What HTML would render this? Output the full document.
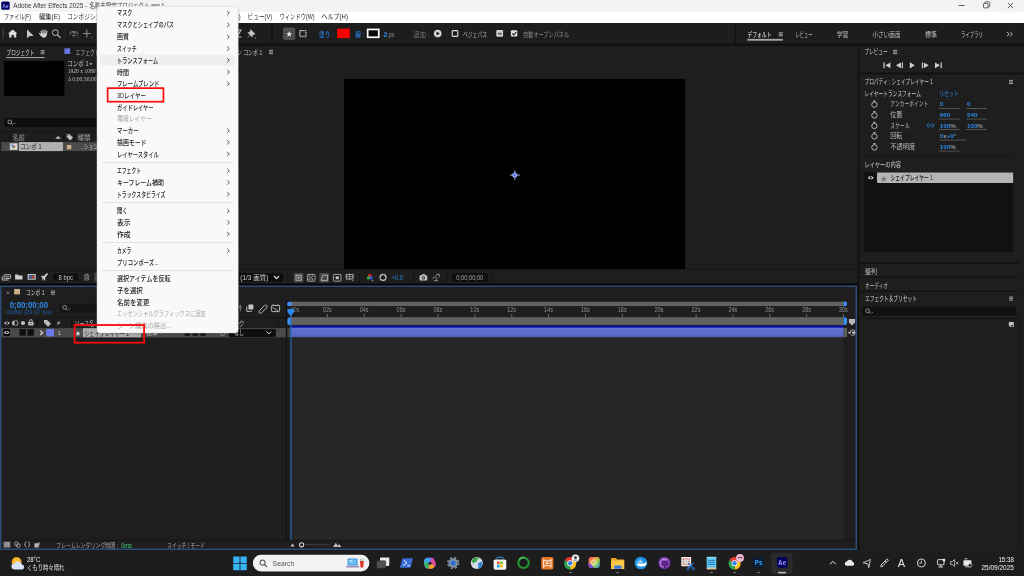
<!DOCTYPE html>
<html lang="ja">
<head>
<meta charset="utf-8">
<title>Adobe After Effects 2025</title>
<style>
html,body{margin:0;padding:0;background:#1e1e1e;overflow:hidden}
body{width:1024px;height:576px;position:relative}
svg{display:block;position:absolute;left:0;top:0;will-change:transform}
svg text{font-family:"Liberation Sans", "Noto Sans CJK JP", sans-serif;white-space:pre}
</style>
</head>
<body>
<svg width="1024" height="576" viewBox="0 0 1024 576">

<rect x="0" y="0" width="1024" height="576" fill="#1e1e1e"/>
<rect x="0" y="0" width="1024" height="23" fill="#ffffff"/>
<rect x="0" y="0" width="1024" height="11.7" fill="#f3f3f3"/>
<rect x="1.2" y="1.5" width="8.5" height="8.3" fill="#00005b" rx="1.6"/>
<text x="5.45" y="7.6" font-size="5" fill="#9999ff" text-anchor="middle" font-weight="700">Ae</text>
<text x="13.2" y="8.49" font-size="7.2" fill="#3c3c3c" textLength="74" lengthAdjust="spacingAndGlyphs">Adobe After Effects 2025 -</text>
<text x="89.4" y="8.39" font-size="7.2" fill="#3c3c3c" textLength="74.4" lengthAdjust="spacingAndGlyphs">名称未設定プロジェクト.aep *</text>
<line x1="958.5" y1="5.5" x2="964.5" y2="5.5" stroke="#333" stroke-width="0.8" />
<rect x="983.5" y="3.3" width="4.6" height="4.6" fill="none" rx="1" stroke="#333" stroke-width="0.8"/>
<path d="M985 3.3 V2.6 a0.8 0.8 0 0 1 .8 -.8 H989 a0.8 0.8 0 0 1 .8 .8 V6 a0.8 0.8 0 0 1 -.8 .8 H988.2" fill="none" stroke="#333" stroke-width="0.7"/>
<path d="M1007.8 2.8 L1013.2 8.2 M1013.2 2.8 L1007.8 8.2" fill="none" stroke="#333" stroke-width="0.8"/>
<text x="4" y="18.89" font-size="7.2" fill="#2a2a2a" textLength="27" lengthAdjust="spacingAndGlyphs">ファイル(F)</text>
<text x="39" y="18.89" font-size="7.2" fill="#2a2a2a" textLength="21" lengthAdjust="spacingAndGlyphs">編集(E)</text>
<text x="67" y="18.89" font-size="7.2" fill="#2a2a2a" textLength="48" lengthAdjust="spacingAndGlyphs">コンポジション(C)</text>
<text x="122" y="18.89" font-size="7.2" fill="#2a2a2a" textLength="29" lengthAdjust="spacingAndGlyphs">レイヤー(L)</text>
<text x="158" y="18.89" font-size="7.2" fill="#2a2a2a" textLength="32" lengthAdjust="spacingAndGlyphs">エフェクト(T)</text>
<text x="194.6" y="18.89" font-size="7.2" fill="#2a2a2a" textLength="46" lengthAdjust="spacingAndGlyphs">アニメーション(A)</text>
<text x="247.6" y="18.89" font-size="7.2" fill="#2a2a2a" textLength="24.6" lengthAdjust="spacingAndGlyphs">ビュー(V)</text>
<text x="279.5" y="18.89" font-size="7.2" fill="#2a2a2a" textLength="35" lengthAdjust="spacingAndGlyphs">ウィンドウ(W)</text>
<text x="321.5" y="18.89" font-size="7.2" fill="#2a2a2a" textLength="26.5" lengthAdjust="spacingAndGlyphs">ヘルプ(H)</text>
<rect x="0" y="23" width="1024" height="22" fill="#1d1d1d"/>
<rect x="0" y="43.6" width="1024" height="1.2" fill="#101010"/>
<line x1="3.2" y1="28" x2="3.2" y2="38.8" stroke="#4a4a4a" stroke-width="1" />
<path d="M8 33.6 L12.7 29.6 L17.4 33.6 L16.2 33.6 L16.2 37.4 L13.9 37.4 L13.9 35 L11.5 35 L11.5 37.4 L9.2 37.4 L9.2 33.6 Z" fill="#dcdcdc"/>
<line x1="21.9" y1="28" x2="21.9" y2="39" stroke="#282828" stroke-width="1" />
<path d="M27 29.3 L27 38.3 L29.6 35.9 L33.7 35.9 Z" fill="#c4c4c4"/>
<path d="M41.6 34 L41 31.2 M43.2 33.6 L43 29.9 M44.9 33.6 L45.2 30 M46.4 34 L47 31.2 M41 35.4 L39.5 33.4" fill="none" stroke="#cfcfcf" stroke-width="1.15" stroke-linecap="round"/>
<path d="M40.8 33.6 L47 33.4 L46.6 36 Q45.6 37.9 43.8 37.8 Q42 37.7 40.9 35.8 Z" fill="#cfcfcf"/>
<circle cx="55.3" cy="32.6" r="2.9" fill="none" stroke="#c8c8c8" stroke-width="0.9"/>
<line x1="57.4" y1="34.8" x2="60.6" y2="37.8" stroke="#c8c8c8" stroke-width="1.1" />
<line x1="65" y1="28" x2="65" y2="39" stroke="#282828" stroke-width="1" />
<path d="M70.4 34.6 q-1.4 -1.6 .6 -2.6 q2.4 -1.2 5.2 -.2 q2.4 1 1.4 2.6 q-.8 1.2 -3.2 1.4" fill="none" stroke="#7c7c7c" stroke-width="0.9"/>
<circle cx="74.2" cy="32.6" r="1.5" fill="#6a6a6a"/>
<path d="M72 34.8 l2.6 .4 l-1.6 1.9 Z" fill="#7c7c7c"/>
<rect x="77.6" y="37.2" width="1" height="1" fill="#7a7a7a"/>
<path d="M86.8 29.6 V37.4 M83 33.5 H90.6" fill="none" stroke="#8a8a8a" stroke-width="1.1"/>
<rect x="91" y="37.2" width="1" height="1" fill="#8a8a8a"/>
<rect x="100" y="30" width="7" height="7" fill="none" rx="1" stroke="#777" stroke-width="0.9"/>
<rect x="113" y="30" width="7" height="7" fill="none" rx="1" stroke="#777" stroke-width="0.9"/>
<rect x="126" y="30" width="7" height="7" fill="none" rx="1" stroke="#777" stroke-width="0.9"/>
<rect x="140" y="30" width="7" height="7" fill="none" rx="1" stroke="#777" stroke-width="0.9"/>
<rect x="153" y="30" width="7" height="7" fill="none" rx="1" stroke="#777" stroke-width="0.9"/>
<rect x="166" y="30" width="7" height="7" fill="none" rx="1" stroke="#777" stroke-width="0.9"/>
<rect x="180" y="30" width="7" height="7" fill="none" rx="1" stroke="#777" stroke-width="0.9"/>
<rect x="193" y="30" width="7" height="7" fill="none" rx="1" stroke="#777" stroke-width="0.9"/>
<rect x="206" y="30" width="7" height="7" fill="none" rx="1" stroke="#777" stroke-width="0.9"/>
<rect x="219" y="30" width="7" height="7" fill="none" rx="1" stroke="#777" stroke-width="0.9"/>
<path d="M236 30 L241 30 L237 37 L241.4 37" fill="none" stroke="#bdbdbd" stroke-width="1.1"/>
<path d="M250.5 29.6 l4.6 4.4 l-1.3 .3 l-1.4 1.4 l-.2 1.3 l-4.3 -4.3 l1.3 -.2 l1.4 -1.4 Z M249.6 35.4 l-1.8 2" fill="#c4c4c4" stroke="#c4c4c4" stroke-width="0.6"/>
<rect x="254.8" y="37.4" width="1" height="1" fill="#bdbdbd"/>
<line x1="272" y1="24" x2="272" y2="43.5" stroke="#101010" stroke-width="1.2" />
<rect x="283" y="27.4" width="12.3" height="12.5" fill="#4d4d4d" rx="1.6"/>
<text x="289.15" y="36" font-size="6.4" fill="#f4f4f4" text-anchor="middle">★</text>
<rect x="299.7" y="30.5" width="6.4" height="6.2" fill="#3a3a3a" rx="0.8" stroke="#c8c8c8" stroke-width="1.1" stroke-dasharray="1.5 .7"/>
<rect x="301.4" y="32.2" width="3" height="2.8" fill="#1d1d1d"/>
<text x="319" y="36.69" font-size="7.2" fill="#2a82e0" textLength="14.5" lengthAdjust="spacingAndGlyphs" font-weight="500">塗り :</text>
<rect x="337.1" y="28.6" width="12.7" height="9.5" fill="#fb0000"/>
<text x="355.3" y="36.69" font-size="7.2" fill="#2a82e0" textLength="8.8" lengthAdjust="spacingAndGlyphs" font-weight="500">線 :</text>
<rect x="366.8" y="28.6" width="12.8" height="9.5" fill="#ffffff"/>
<rect x="368.5" y="30.3" width="9.4" height="6.1" fill="#0a0a0a"/>
<text x="383.4" y="36.69" font-size="7.2" fill="#2d8ceb" font-weight="700">2</text>
<text x="388.4" y="36.55" font-size="6.8" fill="#8c8c8c" textLength="6" lengthAdjust="spacingAndGlyphs">px</text>
<text x="413.5" y="36.69" font-size="7.2" fill="#787878" textLength="15.8" lengthAdjust="spacingAndGlyphs">追加 :</text>
<circle cx="437.7" cy="33.6" r="3.8" fill="#d6d6d6"/>
<path d="M436.5 31.6 L439.8 33.6 L436.5 35.6 Z" fill="#1d1d1d"/>
<line x1="447.6" y1="28.5" x2="447.6" y2="39" stroke="#252525" stroke-width="1" />
<rect x="452.2" y="30.6" width="5.6" height="5.8" fill="none" rx="1" stroke="#e0e0e0" stroke-width="1.1"/>
<text x="463" y="36.79" font-size="7.2" fill="#b4b4b4" textLength="24" lengthAdjust="spacingAndGlyphs">ベジェパス</text>
<rect x="496.3" y="30" width="6.8" height="6.8" fill="#d0d0d0" rx="1"/>
<path d="M499.4 32.6 l-1.6 1.2 l1.6 1.2 Z M500.4 32.6 l1.6 1.2 l-1.6 1.2 Z" fill="#1d1d1d"/>
<rect x="510.9" y="30.3" width="6.4" height="6.3" fill="#e0e0e0" rx="1"/>
<path d="M512.3 33.4 l1.5 1.5 l2.4 -2.9" fill="none" stroke="#1d1d1d" stroke-width="1.1"/>
<text x="523.1" y="37.19" font-size="7.2" fill="#8e8e8e" textLength="46" lengthAdjust="spacingAndGlyphs">自動オープンパネル</text>
<line x1="735.3" y1="24" x2="735.3" y2="43.5" stroke="#101010" stroke-width="1.2" />
<text x="747.6" y="36.99" font-size="7.2" fill="#f2f2f2" textLength="23.8" lengthAdjust="spacingAndGlyphs">デフォルト</text>
<path d="M778.8 32.8 H782.8 M778.8 34.3 H782.8 M778.8 35.8 H782.8" fill="none" stroke="#c4c4c4" stroke-width="0.8"/>
<rect x="747.3" y="38.9" width="35.6" height="1.8" fill="#a8a8a8"/>
<text x="795.5" y="36.99" font-size="7.2" fill="#bdbdbd" textLength="17" lengthAdjust="spacingAndGlyphs">レビュー</text>
<text x="836.7" y="36.99" font-size="7.2" fill="#bdbdbd" textLength="11.8" lengthAdjust="spacingAndGlyphs">学習</text>
<text x="872.5" y="36.99" font-size="7.2" fill="#bdbdbd" textLength="28" lengthAdjust="spacingAndGlyphs">小さい画面</text>
<text x="925" y="36.99" font-size="7.2" fill="#bdbdbd" textLength="12" lengthAdjust="spacingAndGlyphs">標準</text>
<text x="961" y="36.99" font-size="7.2" fill="#bdbdbd" textLength="22" lengthAdjust="spacingAndGlyphs">ライブラリ</text>
<path d="M1007 32 l2.2 2.1 l-2.2 2.1 M1010.2 32 l2.2 2.1 l-2.2 2.1" fill="none" stroke="#d0d0d0" stroke-width="0.9"/>
<rect x="0" y="44.8" width="1024" height="1.2" fill="#111111"/>
<text x="6.5" y="54.86" font-size="7.4" fill="#d8d8d8" textLength="28" lengthAdjust="spacingAndGlyphs">プロジェクト</text>
<path d="M40.6 50.6 H44.6 M40.6 52.2 H44.6 M40.6 53.8 H44.6" fill="none" stroke="#b8b8b8" stroke-width="0.85"/>
<rect x="6.2" y="57.2" width="38.6" height="0.9" fill="#bdbdbd"/>
<rect x="64.4" y="48.3" width="5.7" height="5.6" fill="#6878e6"/>
<text x="75.5" y="54.79" font-size="7.2" fill="#a8a8a8" textLength="97" lengthAdjust="spacingAndGlyphs">エフェクトコントロール シェイプレイヤー 1</text>
<rect x="3.9" y="61.1" width="60.6" height="34.7" fill="#000000"/>
<text x="67" y="65.79" font-size="7.2" fill="#c8c8c8" textLength="21.6" lengthAdjust="spacingAndGlyphs">コンポ 1</text>
<path d="M89.4 63.2 h3 l-1.5 2.1 Z" fill="#c0c0c0"/>
<text x="67.7" y="73.12" font-size="5.6" fill="#bcbcbc" style="font-family:'Liberation Serif',serif">1920 x 1080 (1.00)</text>
<text x="67.7" y="80.52" font-size="5.6" fill="#bcbcbc" style="font-family:'Liberation Serif',serif">Δ 0;00;30;00, 29.97 fps</text>
<rect x="4.4" y="118" width="226" height="9.1" fill="#0e0e0e" rx="2"/>
<circle cx="9.8" cy="121.9" r="1.9" fill="none" stroke="#b0b0b0" stroke-width="0.8"/>
<line x1="11.2" y1="123.3" x2="12.8" y2="124.9" stroke="#b0b0b0" stroke-width="0.8" />
<path d="M13.4 122.9 l1.1 1.1 l1.1 -1.1" fill="none" stroke="#b0b0b0" stroke-width="0.6"/>
<rect x="0" y="131.2" width="232" height="0.8" fill="#161616"/>
<line x1="9.4" y1="134" x2="9.4" y2="139.8" stroke="#0f0f0f" stroke-width="1" />
<text x="12.7" y="139.82" font-size="7" fill="#a0a0a0" textLength="12.2" lengthAdjust="spacingAndGlyphs">名前</text>
<path d="M55.2 138.7 L58.1 135.9 L61 138.7 Z" fill="#c0c0c0"/>
<line x1="63.6" y1="134" x2="63.6" y2="139.8" stroke="#0f0f0f" stroke-width="1.2" />
<path d="M66.6 134.2 h3 l3.4 3.4 l-2.8 2.8 l-3.6 -3.6 Z" fill="#c0c0c0"/>
<circle cx="67.9" cy="135.5" r="0.6" fill="#1e1e1e"/>
<line x1="74.8" y1="134" x2="74.8" y2="139.8" stroke="#0f0f0f" stroke-width="1.2" />
<text x="77.6" y="139.82" font-size="7" fill="#a0a0a0" textLength="12.7" lengthAdjust="spacingAndGlyphs">種類</text>
<rect x="1.2" y="142.1" width="230" height="9" fill="#4a4a4a"/>
<rect x="9.8" y="143.2" width="7.8" height="6.8" fill="#c8c8c8" rx="0.6"/>
<rect x="10.8" y="144.2" width="5.8" height="4.4" fill="#e4e4e4"/>
<rect x="11.6" y="144.6" width="1.8" height="2.2" fill="#3a6ad8"/>
<rect x="13.4" y="145.6" width="2" height="2" fill="#d84a2a"/>
<rect x="12.4" y="147" width="1.6" height="1.4" fill="#3aa84a"/>
<rect x="19" y="142.1" width="44" height="9" fill="#b0b0b0"/>
<text x="20" y="149.09" font-size="7.2" fill="#1c1c1c" textLength="21.5" lengthAdjust="spacingAndGlyphs">コンポ 1</text>
<rect x="66.9" y="145" width="4.4" height="4.3" fill="#c8b287"/>
<text x="79" y="149.22" font-size="7" fill="#c0c0c0" textLength="19" lengthAdjust="spacingAndGlyphs">…ション</text>
<rect x="0" y="269.8" width="232" height="1" fill="#161616"/>
<rect x="4" y="274.8" width="6.6" height="3.6" fill="none" rx="0.6" stroke="#cfcfcf" stroke-width="0.9"/>
<path d="M2.2 276.6 v3.4 h6.4" fill="none" stroke="#cfcfcf" stroke-width="0.9"/>
<rect x="5.4" y="276" width="3.8" height="1.2" fill="#8a8a8a"/>
<path d="M15.1 274.4 h2.8 l.8 1 h3.8 v4.2 h-7.4 Z" fill="#cfcfcf"/>
<rect x="27.6" y="274" width="8.2" height="5.8" fill="#c4c4c4" rx="0.6"/>
<rect x="28.8" y="275" width="5.8" height="3.8" fill="#4a4a4a"/>
<rect x="29.6" y="275.4" width="1.8" height="2.8" fill="#3a6ad8"/>
<rect x="31.6" y="276.2" width="2.2" height="2" fill="#d84a2a"/>
<path d="M43 278.4 L47 274.2" fill="none" stroke="#cfcfcf" stroke-width="1.9" stroke-linecap="round"/>
<path d="M43.6 276 l-2.6 .6 l2 .8 Z M45.2 277.8 l-.6 2.6 l-.8 -2 Z M42.6 279 l-1.2 1.2" fill="#cfcfcf" stroke="#cfcfcf" stroke-width="0.6"/>
<rect x="52.7" y="272.9" width="26.2" height="8.6" fill="#0f0f0f" rx="2" stroke="#2c2c2c" stroke-width="0.6"/>
<text x="65.8" y="279.75" font-size="6.8" fill="#c4c4c4" textLength="14.4" lengthAdjust="spacingAndGlyphs" text-anchor="middle">8 bpc</text>
<path d="M84 275.2 h5.4 M85.8 275 v-.9 h1.8 v.9 M84.6 275.6 l.3 4.4 h3.6 l.3 -4.4 M86 276.4 v2.8 M87.4 276.4 v2.8" fill="none" stroke="#8c8c8c" stroke-width="0.8"/>
<rect x="94.4" y="272.6" width="2.6" height="9" fill="#454545"/>
<line x1="232.5" y1="46" x2="232.5" y2="284.5" stroke="#111111" stroke-width="1.4" />
<rect x="196" y="48.6" width="5.4" height="5.6" fill="#c8b287"/>
<text x="207" y="54.59" font-size="7.2" fill="#c8c8c8" textLength="55.2" lengthAdjust="spacingAndGlyphs">コンポジション コンポ 1</text>
<path d="M269 50.4 H273 M269 52 H273 M269 53.6 H273" fill="none" stroke="#b8b8b8" stroke-width="0.85"/>
<rect x="233" y="78" width="624.6" height="1" fill="#191919"/>
<rect x="233" y="269" width="624.6" height="1" fill="#171717"/>
<rect x="344.1" y="79" width="341" height="190" fill="#000000"/>
<path d="M514.8 170.3 V179.9 M509.9 175.1 H519.9" fill="none" stroke="#9aaad8" stroke-width="1"/>
<circle cx="514.8" cy="175.1" r="2.6" fill="#8fa4ee"/>
<circle cx="514.6" cy="175.1" r="1.3" fill="#6078de"/>
<rect x="232" y="273.1" width="51" height="8.7" fill="#0c0c0c" rx="1.6"/>
<text x="240.3" y="279.95" font-size="6.8" fill="#d0d0d0" textLength="28" lengthAdjust="spacingAndGlyphs">(1/3 画質)</text>
<path d="M274 276 l2.5 2.6 l2.5 -2.6" fill="none" stroke="#e0e0e0" stroke-width="1.1"/>
<line x1="287.7" y1="273.4" x2="287.7" y2="282.4" stroke="#141414" stroke-width="1.2" />
<rect x="293.8" y="272.9" width="9.6" height="9.6" fill="#484848" rx="1"/>
<rect x="296" y="275.2" width="5.2" height="5" fill="none" stroke="#c4c4c4" stroke-width="0.8"/>
<path d="M298.6 276.4 v2.6 M297.3 277.7 h2.6" fill="none" stroke="#c4c4c4" stroke-width="0.7"/>
<rect x="307.4" y="274.4" width="7.6" height="6.8" fill="none" rx="0.8" stroke="#c4c4c4" stroke-width="0.8"/>
<path d="M308.4 275.4 h1.6 v1.6 h-1.6 Z M311.6 275.4 h1.6 v1.6 h-1.6 Z M310 277 h1.6 v1.6 h-1.6 Z M308.4 278.6 h1.6 v1.6 h-1.6 Z M311.6 278.6 h1.6 v1.6 h-1.6 Z" fill="#9a9a9a"/>
<rect x="319.4" y="272.9" width="9.6" height="9.6" fill="#484848" rx="1"/>
<path d="M321.4 280.6 l1.4 -5.4 h4.6 v5.4 Z" fill="none" stroke="#c4c4c4" stroke-width="0.8"/>
<rect x="333.4" y="274.4" width="7.6" height="6.8" fill="none" rx="0.8" stroke="#c4c4c4" stroke-width="0.8"/>
<rect x="335.6" y="276.4" width="3.2" height="2.8" fill="#c4c4c4"/>
<rect x="346.2" y="274.4" width="6.8" height="4.6" fill="none" stroke="#c4c4c4" stroke-width="0.8"/>
<path d="M349.6 273.4 v6.8 M345.4 276.7 h8.4" fill="none" stroke="#c4c4c4" stroke-width="0.6"/>
<path d="M351.8 280.4 h2.2 l-1.1 1.2 Z" fill="#c4c4c4"/>
<line x1="359.8" y1="273.4" x2="359.8" y2="282.4" stroke="#141414" stroke-width="1.2" />
<circle cx="369.8" cy="275.4" r="1.6" fill="#e02a2a"/>
<circle cx="368.4" cy="277.9" r="1.6" fill="#2fb040"/>
<circle cx="371.2" cy="277.9" r="1.6" fill="#2f5fe0"/>
<path d="M371.4 280.4 h2.2 l-1.1 1.2 Z" fill="#c4c4c4"/>
<circle cx="383" cy="277.4" r="2.9" fill="none" stroke="#c4c4c4" stroke-width="1.3"/>
<path d="M383 274.6 l1.4 2.4 M385.6 278.4 l-2.8 .2 M380.6 278.8 l1.4 -2.4" fill="none" stroke="#1e1e1e" stroke-width="0.7"/>
<text x="391.6" y="280.08" font-size="6.6" fill="#2d7fd8" textLength="11.4" lengthAdjust="spacingAndGlyphs">+0.0</text>
<line x1="413.7" y1="273.4" x2="413.7" y2="282.4" stroke="#141414" stroke-width="1.2" />
<rect x="419.6" y="275.2" width="7.6" height="5.4" fill="#c4c4c4" rx="0.8"/>
<rect x="421.8" y="274.2" width="3.2" height="1.4" fill="#c4c4c4"/>
<circle cx="423.4" cy="277.9" r="1.6" fill="#1e1e1e"/>
<circle cx="423.4" cy="277.9" r="0.8" fill="#c4c4c4"/>
<path d="M433 279 a1.8 1.8 0 1 1 2.4 1.6 M436 276 a1.8 1.8 0 1 1 2.4 1.6 M434 280.6 h4.4 M437.6 274.6 h2" fill="none" stroke="#9a9a9a" stroke-width="0.8"/>
<line x1="446.8" y1="273.4" x2="446.8" y2="282.4" stroke="#141414" stroke-width="1.2" />
<rect x="451.8" y="273.1" width="36" height="8.7" fill="#0f0f0f" rx="1.6"/>
<text x="469.8" y="279.9" font-size="6.4" fill="#a6a6a6" textLength="27" lengthAdjust="spacingAndGlyphs" text-anchor="middle">0;00;00;00</text>
<line x1="492.8" y1="273.4" x2="492.8" y2="282.4" stroke="#141414" stroke-width="1.2" />
<rect x="0" y="283.7" width="858" height="1.9" fill="#030303"/>
<rect x="290.6" y="325" width="552.9" height="215" fill="#262626"/>
<path d="M6.8 291.6 l2.2 2.2 M9 291.6 l-2.2 2.2" fill="none" stroke="#9c9c9c" stroke-width="0.8"/>
<rect x="14.2" y="289" width="5.8" height="5.4" fill="#c8b287"/>
<text x="25.8" y="295.19" font-size="7.2" fill="#d0d0d0" textLength="18.8" lengthAdjust="spacingAndGlyphs">コンポ 1</text>
<path d="M50.8 291 H55 M50.8 292.6 H55 M50.8 294.2 H55" fill="none" stroke="#b8b8b8" stroke-width="0.85"/>
<text x="9.7" y="307.67" font-size="8.2" fill="#2d8ceb" textLength="38.3" lengthAdjust="spacingAndGlyphs" font-weight="700">0;00;00;00</text>
<text x="6.2" y="313.64" font-size="5.4" fill="#1d5fae" textLength="46" lengthAdjust="spacingAndGlyphs">00000 (29.97 fps)</text>
<rect x="59.2" y="303.4" width="180" height="9" fill="#151515" rx="2"/>
<circle cx="64.6" cy="307.4" r="1.9" fill="none" stroke="#a8a8a8" stroke-width="0.8"/>
<line x1="66" y1="308.8" x2="67.6" y2="310.4" stroke="#a8a8a8" stroke-width="0.8" />
<path d="M68.2 308.4 l1 1 l1 -1" fill="none" stroke="#a8a8a8" stroke-width="0.6"/>
<path d="M240.4 305 l1 2.6 l-2 0 Z M240.4 308 v3" fill="none" stroke="#8a8a8a" stroke-width="0.8"/>
<rect x="248.4" y="304.4" width="5" height="5" fill="#c8c8c8" rx="0.6"/>
<path d="M246.8 306.4 v5 h5" fill="none" stroke="#c8c8c8" stroke-width="0.9"/>
<path d="M259.4 310.6 l5 -5 a1.5 1.5 0 0 1 2.2 2.2 l-5 5 a1.5 1.5 0 0 1 -2.2 -2.2 Z" fill="none" stroke="#c8c8c8" stroke-width="0.9"/>
<rect x="271.6" y="305.4" width="8" height="6.2" fill="none" rx="0.8" stroke="#c8c8c8" stroke-width="0.9"/>
<path d="M273.2 304.4 v1.6 M278 304.4 v1.6 M272.6 307.4 l5.4 3.4" fill="none" stroke="#c8c8c8" stroke-width="0.8"/>
<path d="M4 323 q2.9 -3.2 5.8 0 q-2.9 3.2 -5.8 0 Z" fill="#d0d0d0"/>
<circle cx="6.9" cy="323" r="1.1" fill="#1e1e1e"/>
<path d="M14.6 320.4 a2.6 2.6 0 0 0 0 5.2 Z" fill="#bcbcbc"/>
<path d="M15.4 320.4 a2.6 2.6 0 0 1 0 5.2" fill="none" stroke="#bcbcbc" stroke-width="0.8"/>
<circle cx="23" cy="323" r="2.1" fill="#bcbcbc"/>
<rect x="28.2" y="321.9" width="5.4" height="3.5" fill="#bcbcbc" rx="0.5"/>
<path d="M29.6 321.9 v-1 a1.3 1.3 0 0 1 2.6 0 v1" fill="none" stroke="#bcbcbc" stroke-width="0.9"/>
<rect x="30.4" y="323" width="1" height="1.2" fill="#1e1e1e"/>
<line x1="36.8" y1="319.4" x2="36.8" y2="326.8" stroke="#121212" stroke-width="1.5" />
<path d="M44 320 h3.2 l3.8 3.8 l-3 3 l-4 -4 Z" fill="#bcbcbc"/>
<text x="57" y="325.14" font-size="5.4" fill="#bcbcbc" font-style="italic">#</text>
<line x1="53.8" y1="319.4" x2="53.8" y2="326.8" stroke="#121212" stroke-width="1.3" />
<line x1="71.8" y1="319.4" x2="71.8" y2="326.8" stroke="#121212" stroke-width="1.5" />
<text x="74.8" y="325.72" font-size="7" fill="#bcbcbc" textLength="19.4" lengthAdjust="spacingAndGlyphs">ソース名</text>
<text x="214" y="325.72" font-size="7" fill="#bcbcbc" textLength="30.6" lengthAdjust="spacingAndGlyphs">親とリンク</text>
<line x1="278.4" y1="319.4" x2="278.4" y2="326.8" stroke="#121212" stroke-width="1.3" />
<rect x="0" y="317" width="286" height="0.8" fill="#161616"/>
<rect x="1" y="328.1" width="285" height="9.3" fill="#4a4a4a"/>
<rect x="3.4" y="328.9" width="6.6" height="7.1" fill="#0c0c0c" rx="0.6"/>
<path d="M4 332.5 q2.7 -3 5.4 0 q-2.7 3 -5.4 0 Z" fill="#efefef"/>
<circle cx="6.7" cy="332.5" r="1.1" fill="#111"/>
<rect x="19.4" y="328.9" width="6.4" height="6.8" fill="#101010" rx="0.5"/>
<rect x="27.4" y="328.9" width="6.5" height="6.8" fill="#101010" rx="0.5"/>
<path d="M40.2 330.6 l2.3 2.2 l-2.3 2.2" fill="none" stroke="#d4d4d4" stroke-width="1.3"/>
<rect x="46.2" y="328.9" width="7.8" height="7.6" fill="#6878e6"/>
<text x="59.3" y="334.83" font-size="6.2" fill="#c4c4c4" text-anchor="middle">1</text>
<text x="77.9" y="334.84" font-size="5.4" fill="#e4e4e4" text-anchor="middle">★</text>
<rect x="83" y="328.2" width="58" height="9.1" fill="#adadad"/>
<text x="84.2" y="335.52" font-size="7" fill="#1a1a1a" textLength="45" lengthAdjust="spacingAndGlyphs">シェイプレイヤー 1</text>
<text x="146" y="335.45" font-size="6.8" fill="#d0d0d0" textLength="12" lengthAdjust="spacingAndGlyphs">標準</text>
<path d="M158.6 330.6 l2.6 2.6 l2 -2.2" fill="none" stroke="#d0d0d0" stroke-width="0.7"/>
<rect x="184.6" y="330" width="5.6" height="5.8" fill="#151515"/>
<rect x="192.4" y="330" width="5.6" height="5.8" fill="#151515"/>
<rect x="200.2" y="330" width="5.6" height="5.8" fill="#151515"/>
<circle cx="222.6" cy="333" r="2.4" fill="none" stroke="#9a9a9a" stroke-width="0.8"/>
<rect x="228.6" y="328.9" width="47.2" height="8.2" fill="#0e0e0e" rx="1.4"/>
<text x="234" y="335.45" font-size="6.8" fill="#d0d0d0" textLength="10" lengthAdjust="spacingAndGlyphs">なし</text>
<path d="M266.6 331.6 l2.3 2.3 l2.3 -2.3" fill="none" stroke="#e0e0e0" stroke-width="1"/>
<line x1="286.4" y1="300" x2="286.4" y2="540" stroke="#121212" stroke-width="1.2" />
<rect x="290.4" y="301.75" width="553.1" height="4.3" fill="#626262"/>
<path d="M287 303.9 q0 -2.2 2.2 -2.2 h2.1 v4.4 h-2.1 q-2.2 0 -2.2 -2.2 Z" fill="#3d8ef5"/>
<path d="M843.5 301.6 h1.6 q2 0 2 2.3 q0 2.3 -2 2.3 h-1.6 Z" fill="#3d8ef5"/>
<text x="290.9" y="311.92" font-size="7" fill="#7a7a7a" textLength="8.4" lengthAdjust="spacingAndGlyphs">00s</text>
<text x="322.87" y="311.92" font-size="7" fill="#929292" textLength="8.8" lengthAdjust="spacingAndGlyphs">02s</text>
<line x1="327.37" y1="314.2" x2="327.37" y2="316.9" stroke="#8a8a8a" stroke-width="0.8" />
<text x="359.74" y="311.92" font-size="7" fill="#929292" textLength="8.8" lengthAdjust="spacingAndGlyphs">04s</text>
<line x1="364.24" y1="314.2" x2="364.24" y2="316.9" stroke="#8a8a8a" stroke-width="0.8" />
<text x="396.61" y="311.92" font-size="7" fill="#929292" textLength="8.8" lengthAdjust="spacingAndGlyphs">06s</text>
<line x1="401.11" y1="314.2" x2="401.11" y2="316.9" stroke="#8a8a8a" stroke-width="0.8" />
<text x="433.48" y="311.92" font-size="7" fill="#929292" textLength="8.8" lengthAdjust="spacingAndGlyphs">08s</text>
<line x1="437.98" y1="314.2" x2="437.98" y2="316.9" stroke="#8a8a8a" stroke-width="0.8" />
<text x="470.35" y="311.92" font-size="7" fill="#929292" textLength="8.8" lengthAdjust="spacingAndGlyphs">10s</text>
<line x1="474.85" y1="314.2" x2="474.85" y2="316.9" stroke="#8a8a8a" stroke-width="0.8" />
<text x="507.22" y="311.92" font-size="7" fill="#929292" textLength="8.8" lengthAdjust="spacingAndGlyphs">12s</text>
<line x1="511.72" y1="314.2" x2="511.72" y2="316.9" stroke="#8a8a8a" stroke-width="0.8" />
<text x="544.09" y="311.92" font-size="7" fill="#929292" textLength="8.8" lengthAdjust="spacingAndGlyphs">14s</text>
<line x1="548.59" y1="314.2" x2="548.59" y2="316.9" stroke="#8a8a8a" stroke-width="0.8" />
<text x="580.96" y="311.92" font-size="7" fill="#929292" textLength="8.8" lengthAdjust="spacingAndGlyphs">16s</text>
<line x1="585.46" y1="314.2" x2="585.46" y2="316.9" stroke="#8a8a8a" stroke-width="0.8" />
<text x="617.83" y="311.92" font-size="7" fill="#929292" textLength="8.8" lengthAdjust="spacingAndGlyphs">18s</text>
<line x1="622.33" y1="314.2" x2="622.33" y2="316.9" stroke="#8a8a8a" stroke-width="0.8" />
<text x="654.7" y="311.92" font-size="7" fill="#929292" textLength="8.8" lengthAdjust="spacingAndGlyphs">20s</text>
<line x1="659.2" y1="314.2" x2="659.2" y2="316.9" stroke="#8a8a8a" stroke-width="0.8" />
<text x="691.57" y="311.92" font-size="7" fill="#929292" textLength="8.8" lengthAdjust="spacingAndGlyphs">22s</text>
<line x1="696.07" y1="314.2" x2="696.07" y2="316.9" stroke="#8a8a8a" stroke-width="0.8" />
<text x="728.44" y="311.92" font-size="7" fill="#929292" textLength="8.8" lengthAdjust="spacingAndGlyphs">24s</text>
<line x1="732.94" y1="314.2" x2="732.94" y2="316.9" stroke="#8a8a8a" stroke-width="0.8" />
<text x="765.31" y="311.92" font-size="7" fill="#929292" textLength="8.8" lengthAdjust="spacingAndGlyphs">26s</text>
<line x1="769.81" y1="314.2" x2="769.81" y2="316.9" stroke="#8a8a8a" stroke-width="0.8" />
<text x="802.18" y="311.92" font-size="7" fill="#929292" textLength="8.8" lengthAdjust="spacingAndGlyphs">28s</text>
<line x1="806.68" y1="314.2" x2="806.68" y2="316.9" stroke="#8a8a8a" stroke-width="0.8" />
<text x="839.05" y="311.92" font-size="7" fill="#929292" textLength="8.8" lengthAdjust="spacingAndGlyphs">30s</text>
<line x1="843.55" y1="314.2" x2="843.55" y2="316.9" stroke="#8a8a8a" stroke-width="0.8" />
<rect x="290.4" y="317.2" width="553.1" height="7.7" fill="#626262"/>
<path d="M287.4 319.4 q0 -1.8 1.8 -1.8 h1.8 v7.5 h-1.8 q-1.8 0 -1.8 -1.8 Z" fill="#3d8ef5"/>
<path d="M843.5 317.2 h1.4 q2.2 0 2.2 2.2 v3.3 q0 2.2 -2.2 2.2 h-1.4 Z" fill="#3d8ef5"/>
<path d="M848.9 319 h6.2 v3.6 l-3.1 3 l-3.1 -3 Z" fill="#b8b8b8"/>
<path d="M849.6 332.6 q.4 -2.8 3.2 -2.8 q2.4 0 2.4 2.8 q0 2.8 -2.4 2.8 q-1.4 0 -2.2 -1" fill="none" stroke="#b4b4b4" stroke-width="0.9"/>
<path d="M847.6 332 l2 2.2 l1.8 -2.4 Z" fill="#b4b4b4"/>
<rect x="852" y="331.6" width="3" height="2" fill="#c8c8c8"/>
<rect x="290.4" y="325.7" width="553.1" height="2.2" fill="#0b0bb2"/>
<rect x="290.4" y="327.8" width="553.1" height="9.3" fill="#5969c8"/>
<rect x="290.4" y="327.8" width="553.1" height="3" fill="#6272d2"/>
<rect x="290.4" y="330.8" width="553.1" height="3" fill="#5d6dcc"/>
<rect x="290.4" y="335.6" width="553.1" height="1.5" fill="#4d5dba"/>
<rect x="843.5" y="327.8" width="3.6" height="9.3" fill="#5c5c5c"/>
<rect x="287.4" y="328.1" width="3" height="9.2" fill="#454545"/>
<line x1="291" y1="314" x2="291" y2="540" stroke="#2a6fc0" stroke-width="1.1" />
<path d="M287.4 309 h6.6 v3 l-3.3 4 l-3.3 -4 Z" fill="#2d8cf0"/>
<rect x="0" y="539.8" width="858" height="0.9" fill="#141414"/>
<rect x="2.8" y="541.2" width="8.2" height="6.8" fill="#4a4a4a" rx="0.8"/>
<rect x="4.4" y="542.2" width="5" height="5" fill="#b4b4b4" rx="0.6"/>
<path d="M5.4 543.6 h2 M5.4 545 h3 M5.4 546.4 h3" fill="none" stroke="#4a4a4a" stroke-width="0.6"/>
<circle cx="16.4" cy="543.8" r="1.9" fill="none" stroke="#b4b4b4" stroke-width="0.8"/>
<circle cx="18.4" cy="545.6" r="1.9" fill="none" stroke="#b4b4b4" stroke-width="0.8"/>
<path d="M26.4 541.8 q-1.2 0 -1.2 1.2 v.7 q0 .8 -.8 .8 q.8 0 .8 .8 v.7 q0 1.2 1.2 1.2 M28 541.8 q1.2 0 1.2 1.2 v.7 q0 .8 .8 .8 q-.8 0 -.8 .8 v.7 q0 1.2 -1.2 1.2" fill="none" stroke="#b4b4b4" stroke-width="0.8"/>
<path d="M34.4 543.2 h3 l2 -1.2 v5.4 h-5 Z" fill="#b4b4b4"/>
<circle cx="39.4" cy="546.6" r="1" fill="#1e1e1e"/>
<text x="56" y="547.65" font-size="6.8" fill="#a4a4a4" textLength="62" lengthAdjust="spacingAndGlyphs">フレームレンダリング時間 :</text>
<text x="121" y="547.5" font-size="6.4" fill="#3cc87a" textLength="11" lengthAdjust="spacingAndGlyphs">0ms</text>
<text x="167" y="547.65" font-size="6.8" fill="#a4a4a4" textLength="38" lengthAdjust="spacingAndGlyphs">スイッチ / モード</text>
<path d="M290.4 546.6 l2.1 -3 l2.1 3 Z" fill="#bcbcbc"/>
<circle cx="301.6" cy="544.8" r="2.1" fill="#1e1e1e" stroke="#d0d0d0" stroke-width="1.1"/>
<line x1="304.4" y1="544.8" x2="330" y2="544.8" stroke="#4a4a4a" stroke-width="0.8" />
<path d="M333 546.9 l2.8 -4.2 l2 3 l1.2 -1.8 l2.4 3 Z" fill="#bcbcbc"/>
<rect x="0.7" y="286.2" width="855.6" height="263.1" fill="none" stroke="#2a4e7c" stroke-width="1.4"/>
<rect x="857.6" y="44.8" width="2" height="504.6" fill="#111111"/>
<rect x="859.6" y="46" width="164.4" height="503.4" fill="#1e1e1e"/>
<text x="864.5" y="54.19" font-size="7.2" fill="#d0d0d0" textLength="23" lengthAdjust="spacingAndGlyphs">プレビュー</text>
<path d="M893 50.4 H897.2 M893 52 H897.2 M893 53.6 H897.2" fill="none" stroke="#b8b8b8" stroke-width="0.85"/>
<rect x="883.4" y="62.4" width="1.2" height="5.8" fill="#d0d0d0"/>
<path d="M890.4 62.4 v5.8 l-5 -2.9 Z" fill="#d0d0d0"/>
<path d="M901 62.4 v5.8 l-5 -2.9 Z" fill="#d0d0d0"/>
<rect x="901.8" y="62.4" width="1.1" height="5.8" fill="#d0d0d0"/>
<path d="M909.8 62.2 v6.2 l5 -3.1 Z" fill="#d0d0d0"/>
<rect x="921.8" y="62.4" width="1.1" height="5.8" fill="#d0d0d0"/>
<path d="M923.8 62.4 v5.8 l5 -2.9 Z" fill="#d0d0d0"/>
<path d="M935 62.4 v5.8 l5 -2.9 Z" fill="#d0d0d0"/>
<rect x="940.6" y="62.4" width="1.2" height="5.8" fill="#d0d0d0"/>
<rect x="859.6" y="72.6" width="164.4" height="1.8" fill="#111111"/>
<text x="864.5" y="83.89" font-size="7.2" fill="#d0d0d0" textLength="68.3" lengthAdjust="spacingAndGlyphs">プロパティ : シェイプレイヤー 1</text>
<path d="M1009 80.4 H1013 M1009 82 H1013 M1009 83.6 H1013" fill="none" stroke="#b8b8b8" stroke-width="0.85"/>
<text x="864.5" y="95.89" font-size="7.2" fill="#d0d0d0" textLength="56.4" lengthAdjust="spacingAndGlyphs">レイヤートランスフォーム</text>
<text x="939.5" y="95.89" font-size="7.2" fill="#2d8ceb" textLength="19" lengthAdjust="spacingAndGlyphs">リセット</text>
<circle cx="874.4" cy="104.7" r="2.7" fill="none" stroke="#c0c0c0" stroke-width="0.9"/>
<path d="M873.2 100.9 h2.4 M874.4 102 v-1" fill="none" stroke="#c0c0c0" stroke-width="0.9"/>
<text x="890.3" y="106.42" font-size="7" fill="#b8b8b8" textLength="38" lengthAdjust="spacingAndGlyphs">アンカーポイント</text>
<text x="939.8" y="106.33" font-size="6.2" font-weight="700"><tspan fill="#2d8ceb">0</tspan></text>
<rect x="939" y="108" width="20.6" height="0.7" fill="#6a6a6a"/>
<text x="967" y="106.33" font-size="6.2" font-weight="700"><tspan fill="#2d8ceb">0</tspan></text>
<rect x="966" y="108" width="20.8" height="0.7" fill="#6a6a6a"/>
<circle cx="874.4" cy="115.4" r="2.7" fill="none" stroke="#c0c0c0" stroke-width="0.9"/>
<path d="M873.2 111.6 h2.4 M874.4 112.7 v-1" fill="none" stroke="#c0c0c0" stroke-width="0.9"/>
<text x="890.3" y="117.12" font-size="7" fill="#b8b8b8" textLength="12" lengthAdjust="spacingAndGlyphs">位置</text>
<text x="939.8" y="117.03" font-size="6.2" font-weight="700"><tspan fill="#2d8ceb">960</tspan></text>
<rect x="939" y="118.7" width="20.6" height="0.7" fill="#6a6a6a"/>
<text x="967" y="117.03" font-size="6.2" font-weight="700"><tspan fill="#2d8ceb">540</tspan></text>
<rect x="966" y="118.7" width="20.8" height="0.7" fill="#6a6a6a"/>
<circle cx="874.4" cy="126" r="2.7" fill="none" stroke="#c0c0c0" stroke-width="0.9"/>
<path d="M873.2 122.2 h2.4 M874.4 123.3 v-1" fill="none" stroke="#c0c0c0" stroke-width="0.9"/>
<text x="890.3" y="127.72" font-size="7" fill="#b8b8b8" textLength="19.5" lengthAdjust="spacingAndGlyphs">スケール</text>
<text x="939.8" y="127.63" font-size="6.2" font-weight="700"><tspan fill="#2d8ceb">100</tspan><tspan fill="#9a9a9a">%</tspan></text>
<rect x="939" y="129.3" width="20.6" height="0.7" fill="#6a6a6a"/>
<text x="967" y="127.63" font-size="6.2" font-weight="700"><tspan fill="#2d8ceb">100</tspan><tspan fill="#9a9a9a">%</tspan></text>
<rect x="966" y="129.3" width="20.8" height="0.7" fill="#6a6a6a"/>
<circle cx="874.4" cy="136.4" r="2.7" fill="none" stroke="#c0c0c0" stroke-width="0.9"/>
<path d="M873.2 132.6 h2.4 M874.4 133.7 v-1" fill="none" stroke="#c0c0c0" stroke-width="0.9"/>
<text x="890.3" y="138.12" font-size="7" fill="#b8b8b8" textLength="12" lengthAdjust="spacingAndGlyphs">回転</text>
<text x="939.8" y="138.03" font-size="6.2" font-weight="700"><tspan fill="#2d8ceb">0</tspan><tspan fill="#9a9a9a">x</tspan><tspan fill="#2d8ceb">+0</tspan><tspan fill="#9a9a9a">°</tspan></text>
<rect x="939" y="139.7" width="27" height="0.7" fill="#6a6a6a"/>
<circle cx="874.4" cy="147.4" r="2.7" fill="none" stroke="#c0c0c0" stroke-width="0.9"/>
<path d="M873.2 143.6 h2.4 M874.4 144.7 v-1" fill="none" stroke="#c0c0c0" stroke-width="0.9"/>
<text x="890.3" y="149.12" font-size="7" fill="#b8b8b8" textLength="25" lengthAdjust="spacingAndGlyphs">不透明度</text>
<text x="939.8" y="149.03" font-size="6.2" font-weight="700"><tspan fill="#2d8ceb">100</tspan><tspan fill="#9a9a9a">%</tspan></text>
<rect x="939" y="150.7" width="20.6" height="0.7" fill="#6a6a6a"/>
<path d="M929.6 123.9 h-1 a1.5 1.5 0 0 0 0 3 h1 M931.6 123.9 h1 a1.5 1.5 0 0 1 0 3 h-1 M929.4 125.4 h2.4" fill="none" stroke="#2d8ceb" stroke-width="0.8"/>
<rect x="864.5" y="155.2" width="147.4" height="0.8" fill="#111111"/>
<text x="864.5" y="166.59" font-size="7.2" fill="#d0d0d0" textLength="36.4" lengthAdjust="spacingAndGlyphs">レイヤーの内容</text>
<rect x="863.8" y="172.2" width="149.4" height="79.8" fill="#111111" rx="1.2"/>
<rect x="877" y="172.5" width="136.2" height="10.6" fill="#b4b4b4" rx="1"/>
<path d="M867.8 177.7 q2.95 -3.2 5.9 0 q-2.95 3.2 -5.9 0 Z" fill="#e4e4e4"/>
<circle cx="870.75" cy="177.7" r="1.1" fill="#111"/>
<text x="883.7" y="180.56" font-size="7.4" fill="#7a7a7a" text-anchor="middle">★</text>
<text x="890.5" y="180.19" font-size="7.2" fill="#141414" textLength="42.3" lengthAdjust="spacingAndGlyphs" font-weight="500">シェイプレイヤー 1</text>
<rect x="859.6" y="262.6" width="159.2" height="1.2" fill="#111111"/>
<text x="865" y="273.72" font-size="7" fill="#c4c4c4" textLength="12" lengthAdjust="spacingAndGlyphs">整列</text>
<rect x="859.6" y="276.8" width="159.2" height="1.2" fill="#111111"/>
<text x="865" y="287.52" font-size="7" fill="#c4c4c4" textLength="23" lengthAdjust="spacingAndGlyphs">オーディオ</text>
<rect x="859.6" y="290.8" width="159.2" height="1.2" fill="#111111"/>
<text x="865" y="301.19" font-size="7.2" fill="#d8d8d8" textLength="52" lengthAdjust="spacingAndGlyphs">エフェクト＆プリセット</text>
<path d="M1009.2 297 H1013 M1009.2 298.6 H1013 M1009.2 300.2 H1013" fill="none" stroke="#b8b8b8" stroke-width="0.85"/>
<rect x="861.8" y="306.6" width="154.4" height="9.2" fill="#111111" rx="2"/>
<circle cx="867.6" cy="310.8" r="1.9" fill="none" stroke="#a8a8a8" stroke-width="0.8"/>
<line x1="869" y1="312.2" x2="870.6" y2="313.8" stroke="#a8a8a8" stroke-width="0.8" />
<path d="M871.2 311.8 l1 1 l1 -1" fill="none" stroke="#a8a8a8" stroke-width="0.6"/>
<rect x="859.6" y="318" width="159.2" height="1" fill="#111111"/>
<rect x="1018.6" y="318" width="0.8" height="231" fill="#141414"/>
<path d="M1008.8 322 h5 v5 h-3.4 l-1.6 -1.6 Z" fill="#c0c0c0"/>
<rect x="1011.2" y="325" width="1.8" height="1.4" fill="#1e1e1e"/>
<rect x="0" y="550" width="1024" height="26" fill="#1d1d1e"/>
<circle cx="16.6" cy="562" r="5" fill="#f2a01e"/>
<circle cx="16.6" cy="562" r="3.4" fill="#f8c24a"/>
<path d="M14.2 569.4 a2.9 2.9 0 0 1 .3 -5.8 a4 4 0 0 1 7.4 1 a2.4 2.4 0 0 1 -.4 4.8 Z" fill="#d4e4f6"/>
<text x="27" y="561.6" font-size="6.4" fill="#f0f0f0" textLength="13.3" lengthAdjust="spacingAndGlyphs">28°C</text>
<text x="27" y="569.65" font-size="6.8" fill="#e4e4e4" textLength="37.4" lengthAdjust="spacingAndGlyphs">くもり時々晴れ</text>
<rect x="233.2" y="556.6" width="6.4" height="6.4" fill="#36b4f5" rx="0.4"/>
<rect x="240.4" y="556.6" width="6.4" height="6.4" fill="#36b4f5" rx="0.4"/>
<rect x="233.2" y="563.8" width="6.4" height="6.4" fill="#36b4f5" rx="0.4"/>
<rect x="240.4" y="563.8" width="6.4" height="6.4" fill="#36b4f5" rx="0.4"/>
<rect x="252.8" y="554.8" width="116.6" height="16.6" fill="#f2f2f2" rx="8.3"/>
<circle cx="262.6" cy="562.6" r="2.6" fill="none" stroke="#333" stroke-width="1"/>
<line x1="264.6" y1="564.6" x2="266.8" y2="566.8" stroke="#333" stroke-width="1.1" />
<text x="272.6" y="565.65" font-size="6.8" fill="#555" textLength="21.6" lengthAdjust="spacingAndGlyphs">Search</text>
<rect x="347.6" y="558.4" width="10" height="7.2" fill="#3f8fe0" rx="0.8"/>
<rect x="348.6" y="559.4" width="8" height="5.2" fill="#6fc0f2"/>
<rect x="349.4" y="560.2" width="2.4" height="1.6" fill="#bfe4fa"/>
<path d="M346.6 565.8 h12 l.8 1.8 h-13.6 Z" fill="#9a8fc0"/>
<path d="M360 561 h3.8 l-.5 6.4 h-2.8 Z" fill="#e0342c"/>
<path d="M361 561 l-.6 -2.4 M362.6 561 l.8 -2.6" fill="none" stroke="#4aa04a" stroke-width="0.7"/>
<rect x="380" y="557.4" width="9.3" height="8.5" fill="#ececec" rx="0.8"/>
<rect x="376.6" y="560.8" width="9.1" height="7.6" fill="#505050" rx="0.8" stroke="#1d1d1e" stroke-width="0.5"/>
<path d="M402.4 558.3 h10.6 l-2.4 9.5 h-10.7 Z" fill="#3a6dd6"/>
<path d="M404 560.4 l3 2.5 l-3.8 2.7 M407.4 565.8 h2.6" fill="none" stroke="#fff" stroke-width="0.9"/>
<path d="M426.4 558 q1 -0.6 2.4 -.4 l3.4 .2 q1.4 .2 2 1.6 l1.4 3.8 q.6 1.8 -.8 3.2 l-2 1.8 q-1.2 .8 -2.6 .4 l-3.6 -.2 q-1.4 -.2 -1.8 -1.6 l-1 -4.4 q-.2 -1.6 .8 -2.8 Z" fill="#b35ce0"/>
<path d="M424 562.2 q-.4 -2.4 1.4 -3.6 q1.4 -1 3.6 -.6 l2.2 .2 l-2.4 4.6 l-3.6 1.8 Z" fill="#35a6f0"/>
<path d="M424 562.4 l1 4.2 q.6 1.6 2.4 1.8 l1.4 .1 l.2 -4 l-1.4 -2.8 Z" fill="#36b86a"/>
<path d="M428.6 568.6 l2 .2 q1.6 .2 2.6 -.8 l1.6 -1.6 l-3 -2.6 l-3 1.6 Z" fill="#f0a21c"/>
<path d="M431.8 558.2 q1.8 .2 2.4 1.8 l1.4 3.6 q.6 1.6 -.6 3 l-3 -2.8 l-.8 -3 Z" fill="#e0489a"/>
<circle cx="430" cy="563.2" r="1.5" fill="#1d1d1e"/>
<circle cx="453.2" cy="563" r="4.7" fill="#8290a2"/>
<circle cx="453.2" cy="563" r="5.3" fill="none" stroke="#76859a" stroke-width="1.9" stroke-dasharray="2.2 2"/>
<circle cx="453.2" cy="563" r="2.5" fill="#2b6fd6"/>
<circle cx="476.8" cy="563" r="6" fill="#d4dde6"/>
<path d="M471.6 561 q1.6 -3.6 5.4 -3.8 l2.2 1.6 l-2.6 1 l.6 2 l-2.4 .2 l-1 2 Z" fill="#3aa04a"/>
<path d="M477.6 563.4 l4.4 -2 q1.2 3 -1.2 6 q-1.6 1.4 -3.2 1.4 l1 -2.8 Z" fill="#2f86d0"/>
<rect x="493.6" y="559.4" width="12.7" height="10.3" fill="#f4f4f4" rx="1.6"/>
<path d="M496.8 559.4 v-1.2 q0 -1 1 -1 h4.2 q1 0 1 1 v1.2" fill="none" stroke="#3a9be0" stroke-width="1"/>
<rect x="497" y="561.6" width="2.6" height="2.6" fill="#f25022"/>
<rect x="500.2" y="561.6" width="2.6" height="2.6" fill="#7fba00"/>
<rect x="497" y="564.8" width="2.6" height="2.6" fill="#00a4ef"/>
<rect x="500.2" y="564.8" width="2.6" height="2.6" fill="#ffb900"/>
<circle cx="523.5" cy="562.8" r="5.2" fill="none" stroke="#22962f" stroke-width="2.1"/>
<path d="M519.2 559.6 a5.4 5.4 0 0 1 5 -2.2" fill="none" stroke="#5cc868" stroke-width="1.2"/>
<rect x="541.2" y="557" width="12.2" height="12.6" fill="#e47628" rx="1.8"/>
<path d="M543.6 559.8 q3.6 2.6 7.4 0 v7 q-3.8 -2.6 -7.4 0 Z" fill="none" stroke="#fbe8d8" stroke-width="1.1"/>
<rect x="545.6" y="562.5" width="3.4" height="1.6" fill="#fbe8d8"/>
<path d="M570.2 563.3 L564.83 560.2 A6.2 6.2 0 0 1 575.57 560.2 Z" fill="#e33b2e"/>
<path d="M570.2 563.3 L575.57 560.2 A6.2 6.2 0 0 1 570.2 569.5 Z" fill="#fbc116"/>
<path d="M570.2 563.3 L570.2 569.5 A6.2 6.2 0 0 1 564.83 560.2 Z" fill="#2da44e"/>
<circle cx="570.2" cy="563.3" r="2.98" fill="#fff"/>
<circle cx="570.2" cy="563.3" r="2.23" fill="#3b7de9"/>
<circle cx="575.5" cy="558.3" r="3.8" fill="#f0f0f0"/>
<circle cx="575.5" cy="557.6" r="1.4" fill="#3a3030"/>
<path d="M573.2 560.6 q2.3 -2.4 4.6 0 Z" fill="#555"/>
<rect x="569.2" y="572.2" width="3" height="0.9" fill="#a0a0a0" rx="0.4"/>
<defs><linearGradient id="cg" x1="0" y1="0" x2="1" y2="1"><stop offset="0" stop-color="#f0407a"/><stop offset="0.35" stop-color="#f5a03a"/><stop offset="0.65" stop-color="#8ad048"/><stop offset="1" stop-color="#3a8af0"/></linearGradient></defs>
<rect x="588.6" y="557" width="11.2" height="10.9" fill="url(#cg)" rx="2.6"/>
<path d="M588.6 562 v3.2 q0 2.7 2.7 2.7 h3 Z" fill="#7a4ae0"/>
<circle cx="594" cy="562.4" r="2.6" fill="none" stroke="#ffffff" stroke-width="0.9" opacity="0.85"/>
<circle cx="594" cy="562.4" r="1" fill="#ffffff" opacity="0.8"/>
<path d="M611.1 557.9 h4.8 l1.4 1.5 h6.9 v9.6 h-13.1 Z" fill="#e8a21e"/>
<rect x="611.1" y="560.4" width="13.1" height="8.6" fill="#fbc94a" rx="0.6"/>
<rect x="614.2" y="565.6" width="7.4" height="3.2" fill="#3a7ad8" rx="0.6"/>
<rect x="616.2" y="572.2" width="3" height="0.9" fill="#a0a0a0" rx="0.4"/>
<circle cx="640.9" cy="563" r="6.3" fill="#1d91e6"/>
<path d="M636.4 563.4 h7.4 q1.4 0 1.8 -1.5 q1 .4 1 1.3 q-.4 3.2 -4.4 3.4 q-4.4 .2 -5.8 -3.2 Z" fill="#fff"/>
<rect x="637.8" y="561.2" width="1.3" height="1.3" fill="#fff"/>
<rect x="639.5" y="561.2" width="1.3" height="1.3" fill="#fff"/>
<rect x="641.2" y="561.2" width="1.3" height="1.3" fill="#fff"/>
<rect x="639.5" y="559.5" width="1.3" height="1.3" fill="#fff"/>
<circle cx="664.4" cy="563" r="6.2" fill="#6a2c9a"/>
<circle cx="664.4" cy="563" r="4.9" fill="#b07ad8"/>
<path d="M661.6 560 l.3 1.6 q-1 1.2 -.6 2.8 q.6 1.8 2.6 2 v1.8 h2.2 v-1.8 q2 -.2 2.6 -2 q.4 -1.6 -.6 -2.8 l.3 -1.6 l-1.6 .8 q-1.8 -.4 -3.6 0 Z" fill="#5a2488"/>
<rect x="681.3" y="557" width="9.8" height="9.3" fill="#f4f4f4" rx="0.8"/>
<rect x="683" y="558.8" width="6.4" height="5.8" fill="#d8d8d8" stroke="#d23a2a" stroke-width="0.9" stroke-dasharray="1.2 .9"/>
<path d="M688 562.8 l5.2 5.4 M693.6 562.8 l-5.2 5.4" fill="none" stroke="#2f7ad6" stroke-width="1.2"/>
<circle cx="688.2" cy="568.8" r="1.1" fill="none" stroke="#2f7ad6" stroke-width="0.9"/>
<circle cx="693.4" cy="568.8" r="1.1" fill="none" stroke="#2f7ad6" stroke-width="0.9"/>
<rect x="706.7" y="557.6" width="9.6" height="11.4" fill="#5ac4ee" rx="1"/>
<path d="M708.2 560.4 h6.6 M708.2 562.4 h6.6 M708.2 564.4 h6.6" fill="none" stroke="#1f6fa8" stroke-width="0.8"/>
<rect x="706.7" y="556.8" width="9.6" height="1.6" fill="#8adcf8"/>
<rect x="706.7" y="567.4" width="9.6" height="2" fill="#d8c0a0" rx="0.6"/>
<rect x="710" y="572.2" width="2.8" height="0.9" fill="#a0a0a0" rx="0.4"/>
<path d="M734.6 563.3 L729.23 560.2 A6.2 6.2 0 0 1 739.97 560.2 Z" fill="#e33b2e"/>
<path d="M734.6 563.3 L739.97 560.2 A6.2 6.2 0 0 1 734.6 569.5 Z" fill="#fbc116"/>
<path d="M734.6 563.3 L734.6 569.5 A6.2 6.2 0 0 1 729.23 560.2 Z" fill="#2da44e"/>
<circle cx="734.6" cy="563.3" r="2.98" fill="#fff"/>
<circle cx="734.6" cy="563.3" r="2.23" fill="#3b7de9"/>
<circle cx="740" cy="557.9" r="3.9" fill="#f0b8d4"/>
<circle cx="738.8" cy="557.6" r="0.9" fill="#444"/>
<circle cx="741.2" cy="557.6" r="0.9" fill="#444"/>
<rect x="733.2" y="572.2" width="2.8" height="0.9" fill="#a0a0a0" rx="0.4"/>
<rect x="753.1" y="557" width="11.1" height="10.8" fill="#0a1c34" rx="2"/>
<text x="758.7" y="564.8" font-size="6.4" fill="#31a8ff" text-anchor="middle" font-weight="700">Ps</text>
<rect x="757.2" y="572.2" width="2.8" height="0.9" fill="#a0a0a0" rx="0.4"/>
<rect x="771.2" y="552.8" width="21.3" height="21.1" fill="#2b2b2d" rx="2.4"/>
<rect x="776.9" y="557" width="10.6" height="10.8" fill="#00005b" rx="2"/>
<text x="782.2" y="564.8" font-size="6.4" fill="#9999ff" text-anchor="middle" font-weight="700">Ae</text>
<rect x="777.8" y="571.8" width="8.4" height="1.6" fill="#b4b4b4" rx="0.8"/>
<path d="M830 564.2 l2.9 -2.8 l2.9 2.8" fill="none" stroke="#e8e8e8" stroke-width="1"/>
<path d="M846.4 565.8 a2.2 2.2 0 0 1 .4 -4.3 a3.2 3.2 0 0 1 6 .6 a1.9 1.9 0 0 1 -.2 3.7 Z" fill="#e8e8e8"/>
<path d="M870.4 559.4 l-7.2 3.4 l4.6 1 l1 3.8 Z" fill="none" stroke="#e8e8e8" stroke-width="0.8"/>
<path d="M881.4 567 q-1.4 -.8 -.4 -2 l5.6 -5.6 q1.2 -.6 1.8 .8 l-5.6 5.6 q-.6 1.6 -1.4 1.2 Z M885 561 l1.6 1.6" fill="none" stroke="#e8e8e8" stroke-width="0.9"/>
<text x="901.5" y="567.36" font-size="11" fill="#e8e8e8" text-anchor="middle">A</text>
<circle cx="921.4" cy="563" r="4" fill="none" stroke="#e8e8e8" stroke-width="0.9"/>
<path d="M921.4 560.6 v2.6 h-2.2" fill="none" stroke="#e8e8e8" stroke-width="0.8"/>
<rect x="937.6" y="559.6" width="6.4" height="5.2" fill="none" rx="0.6" stroke="#e8e8e8" stroke-width="0.9"/>
<path d="M940.8 564.8 v2 M938.6 567 h4.4" fill="none" stroke="#e8e8e8" stroke-width="0.9"/>
<rect x="942.8" y="558.8" width="2.4" height="2.6" fill="#e8e8e8"/>
<path d="M950.6 561.6 h1.6 l2.4 -2 v6.8 l-2.4 -2 h-1.6 Z" fill="none" stroke="#e8e8e8" stroke-width="0.7"/>
<path d="M956 561.8 l2.4 2.6 M958.4 561.8 l-2.4 2.6" fill="none" stroke="#e8e8e8" stroke-width="0.7"/>
<rect x="963.4" y="560.2" width="8" height="5.6" fill="#e8e8e8" rx="0.8"/>
<path d="M964.4 558.8 h3 M965 566.8 h5" fill="none" stroke="#e8e8e8" stroke-width="0.8"/>
<circle cx="970" cy="565.4" r="1.8" fill="#1d1d1e" stroke="#e8e8e8" stroke-width="0.6"/>
<text x="1014" y="561.68" font-size="6.6" fill="#f0f0f0" textLength="15.6" lengthAdjust="spacingAndGlyphs" text-anchor="end">15:38</text>
<text x="1014" y="570.28" font-size="6.6" fill="#f0f0f0" textLength="32.6" lengthAdjust="spacingAndGlyphs" text-anchor="end">25/09/2025</text>
<rect x="96.2" y="6.6" width="142.6" height="327.6" rx="4.5" fill="#000" opacity="0.10"/>
<rect x="95.6" y="6" width="143.8" height="329.2" rx="5" fill="#000" opacity="0.06"/>
<rect x="97" y="6.2" width="141.2" height="326.7" fill="#f9f9f9" rx="3.2" stroke="#d6d6d6" stroke-width="0.5"/>
<rect x="100.2" y="54.5" width="134.6" height="11.2" fill="#efefef" rx="2"/>
<text x="117" y="15.43" font-size="7.3" fill="#222222" textLength="15.4" lengthAdjust="spacingAndGlyphs" font-weight="500">マスク</text>
<path d="M227.2 10.9 l2.1 2.1 l-2.1 2.1" fill="none" stroke="#4a4a4a" stroke-width="0.95"/>
<text x="117" y="27.33" font-size="7.3" fill="#222222" textLength="57" lengthAdjust="spacingAndGlyphs" font-weight="500">マスクとシェイプのパス</text>
<path d="M227.2 22.8 l2.1 2.1 l-2.1 2.1" fill="none" stroke="#4a4a4a" stroke-width="0.95"/>
<text x="117" y="39.33" font-size="7.3" fill="#222222" textLength="12" lengthAdjust="spacingAndGlyphs" font-weight="500">画質</text>
<path d="M227.2 34.8 l2.1 2.1 l-2.1 2.1" fill="none" stroke="#4a4a4a" stroke-width="0.95"/>
<text x="117" y="51.03" font-size="7.3" fill="#222222" textLength="19.6" lengthAdjust="spacingAndGlyphs" font-weight="500">スイッチ</text>
<path d="M227.2 46.5 l2.1 2.1 l-2.1 2.1" fill="none" stroke="#4a4a4a" stroke-width="0.95"/>
<text x="117" y="62.73" font-size="7.3" fill="#222222" textLength="41.2" lengthAdjust="spacingAndGlyphs" font-weight="500">トランスフォーム</text>
<path d="M227.2 58.2 l2.1 2.1 l-2.1 2.1" fill="none" stroke="#4a4a4a" stroke-width="0.95"/>
<text x="117" y="74.53" font-size="7.3" fill="#222222" textLength="12" lengthAdjust="spacingAndGlyphs" font-weight="500">時間</text>
<path d="M227.2 70 l2.1 2.1 l-2.1 2.1" fill="none" stroke="#4a4a4a" stroke-width="0.95"/>
<text x="117" y="86.03" font-size="7.3" fill="#222222" textLength="42.4" lengthAdjust="spacingAndGlyphs" font-weight="500">フレームブレンド</text>
<path d="M227.2 81.5 l2.1 2.1 l-2.1 2.1" fill="none" stroke="#4a4a4a" stroke-width="0.95"/>
<text x="117" y="97.83" font-size="7.3" fill="#222222" textLength="29" lengthAdjust="spacingAndGlyphs" font-weight="500">3Dレイヤー</text>
<text x="117" y="109.53" font-size="7.3" fill="#222222" textLength="36.4" lengthAdjust="spacingAndGlyphs" font-weight="500">ガイドレイヤー</text>
<text x="117" y="121.23" font-size="7.3" fill="#a6a6a6" textLength="35" lengthAdjust="spacingAndGlyphs" font-weight="400">環境レイヤー</text>
<text x="117" y="133.03" font-size="7.3" fill="#222222" textLength="21.6" lengthAdjust="spacingAndGlyphs" font-weight="500">マーカー</text>
<path d="M227.2 128.5 l2.1 2.1 l-2.1 2.1" fill="none" stroke="#4a4a4a" stroke-width="0.95"/>
<text x="117" y="144.83" font-size="7.3" fill="#222222" textLength="29.6" lengthAdjust="spacingAndGlyphs" font-weight="500">描画モード</text>
<path d="M227.2 140.3 l2.1 2.1 l-2.1 2.1" fill="none" stroke="#4a4a4a" stroke-width="0.95"/>
<text x="117" y="156.53" font-size="7.3" fill="#222222" textLength="41.8" lengthAdjust="spacingAndGlyphs" font-weight="500">レイヤースタイル</text>
<path d="M227.2 152 l2.1 2.1 l-2.1 2.1" fill="none" stroke="#4a4a4a" stroke-width="0.95"/>
<text x="117" y="173.13" font-size="7.3" fill="#222222" textLength="24" lengthAdjust="spacingAndGlyphs" font-weight="500">エフェクト</text>
<path d="M227.2 168.6 l2.1 2.1 l-2.1 2.1" fill="none" stroke="#4a4a4a" stroke-width="0.95"/>
<text x="117" y="184.93" font-size="7.3" fill="#222222" textLength="46.8" lengthAdjust="spacingAndGlyphs" font-weight="500">キーフレーム補助</text>
<path d="M227.2 180.4 l2.1 2.1 l-2.1 2.1" fill="none" stroke="#4a4a4a" stroke-width="0.95"/>
<text x="117" y="196.63" font-size="7.3" fill="#222222" textLength="48.4" lengthAdjust="spacingAndGlyphs" font-weight="500">トラックスタビライズ</text>
<path d="M227.2 192.1 l2.1 2.1 l-2.1 2.1" fill="none" stroke="#4a4a4a" stroke-width="0.95"/>
<text x="117" y="213.33" font-size="7.3" fill="#222222" textLength="10.6" lengthAdjust="spacingAndGlyphs" font-weight="500">開く</text>
<path d="M227.2 208.8 l2.1 2.1 l-2.1 2.1" fill="none" stroke="#4a4a4a" stroke-width="0.95"/>
<text x="117" y="224.93" font-size="7.3" fill="#222222" textLength="13.6" lengthAdjust="spacingAndGlyphs" font-weight="500">表示</text>
<path d="M227.2 220.4 l2.1 2.1 l-2.1 2.1" fill="none" stroke="#4a4a4a" stroke-width="0.95"/>
<text x="117" y="236.53" font-size="7.3" fill="#222222" textLength="13.6" lengthAdjust="spacingAndGlyphs" font-weight="500">作成</text>
<path d="M227.2 232 l2.1 2.1 l-2.1 2.1" fill="none" stroke="#4a4a4a" stroke-width="0.95"/>
<text x="117" y="253.13" font-size="7.3" fill="#222222" textLength="14.2" lengthAdjust="spacingAndGlyphs" font-weight="500">カメラ</text>
<path d="M227.2 248.6 l2.1 2.1 l-2.1 2.1" fill="none" stroke="#4a4a4a" stroke-width="0.95"/>
<text x="117" y="264.93" font-size="7.3" fill="#222222" textLength="41.6" lengthAdjust="spacingAndGlyphs" font-weight="500">プリコンポーズ...</text>
<text x="117" y="281.33" font-size="7.3" fill="#222222" textLength="53.4" lengthAdjust="spacingAndGlyphs" font-weight="500">選択アイテムを反転</text>
<text x="117" y="293.03" font-size="7.3" fill="#222222" textLength="25.8" lengthAdjust="spacingAndGlyphs" font-weight="500">子を選択</text>
<text x="117" y="304.73" font-size="7.3" fill="#222222" textLength="32.4" lengthAdjust="spacingAndGlyphs" font-weight="500">名前を変更</text>
<text x="117" y="316.43" font-size="7.3" fill="#a6a6a6" textLength="88.6" lengthAdjust="spacingAndGlyphs" font-weight="400">エッセンシャルグラフィックスに追加</text>
<text x="117" y="328.03" font-size="7.3" fill="#a6a6a6" textLength="54.4" lengthAdjust="spacingAndGlyphs" font-weight="400">シーン編集の検出...</text>
<rect x="101.8" y="162" width="131.6" height="0.7" fill="#d9d9d9"/>
<rect x="101.8" y="202" width="131.6" height="0.7" fill="#d9d9d9"/>
<rect x="101.8" y="242.1" width="131.6" height="0.7" fill="#d9d9d9"/>
<rect x="101.8" y="270" width="131.6" height="0.7" fill="#d9d9d9"/>
<rect x="107.65" y="88.15" width="55.8" height="13.55" fill="none" stroke="#fb0a0c" stroke-width="1.7"/>
<rect x="74.6" y="325" width="69.5" height="17.7" fill="none" stroke="#fb0a0c" stroke-width="1.8"/>
</svg>
</body>
</html>
